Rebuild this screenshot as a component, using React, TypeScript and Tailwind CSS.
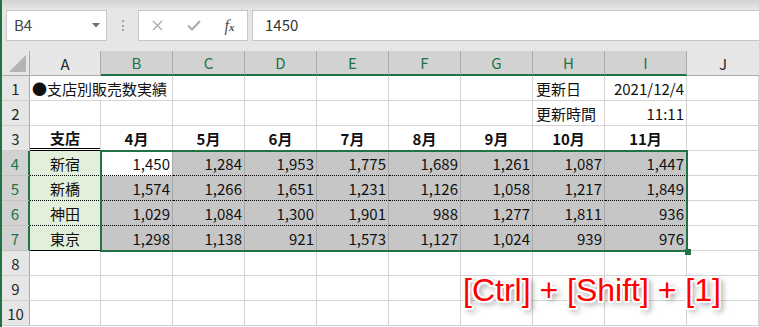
const colLetters = ['B', 'C', 'D', 'E', 'F', 'G', 'H', 'I'];
const months = ['4月', '5月', '6月', '7月', '8月', '9月', '10月', '11月'];

const branches = [
  { name: '新宿', values: ['1,450', '1,284', '1,953', '1,775', '1,689', '1,261', '1,087', '1,447'] },
  { name: '新橋', values: ['1,574', '1,266', '1,651', '1,231', '1,126', '1,058', '1,217', '1,849'] },
  { name: '神田', values: ['1,029', '1,084', '1,300', '1,901', '988', '1,277', '1,811', '936'] },
  { name: '東京', values: ['1,298', '1,138', '921', '1,573', '1,127', '1,024', '939', '976'] },
];

const cell = 'flex items-center border-r border-b border-[#d4d4d4] px-[2px] text-[15px] leading-none whitespace-nowrap';
const sheetGrid = 'grid grid-cols-[28px_71px_repeat(7,72px)_82px_1fr] grid-rows-[repeat(11,25px)]';

function RowHead({ n, selected }: { n: number; selected?: boolean }) {
  return selected ? (
    <div className="flex items-center justify-center border-b border-r-2 border-b-[#c4c4c4] border-r-[#217346] bg-[#d2d2d2] text-[15px] leading-none text-[#217346]">
      {n}
    </div>
  ) : (
    <div className="flex items-center justify-center border-b border-r border-b-[#cfcfcf] border-r-[#ababab] bg-[#e6e6e6] text-[15px] leading-none text-[#262626]">
      {n}
    </div>
  );
}

function EmptyRow({ n }: { n: number }) {
  return (
    <>
      <RowHead n={n} />
      {Array.from({ length: 10 }).map((_, i) => (
        <div key={i} className={cell} />
      ))}
    </>
  );
}

export default function App() {
  return (
    <div className="relative h-[327px] w-[759px] overflow-hidden border-l-2 border-[#217346] bg-white font-['Noto_Sans_CJK_JP',sans-serif] text-[#111]">
      {/* formula bar */}
      <div className="h-[51px] bg-[#e6e6e6]">
        <div className="h-[10px] bg-gradient-to-b from-[#d3d3d3] to-[#e6e6e6]" />
        <div className="flex h-[31px]">
          <div className="ml-[4px] flex w-[101px] items-center justify-between border border-[#c6c6c6] bg-white pl-[7px] pr-[6px]">
            <span className="text-[15px] text-[#444]">B4</span>
            <svg width="8" height="5" viewBox="0 0 8 5">
              <path d="M0 0h8L4 4.5z" fill="#6d6d6d" />
            </svg>
          </div>
          <div className="flex w-[31px] flex-col items-center justify-center gap-[2.5px]">
            <span className="h-[2px] w-[2px] bg-[#a0a0a0]" />
            <span className="h-[2px] w-[2px] bg-[#a0a0a0]" />
            <span className="h-[2px] w-[2px] bg-[#a0a0a0]" />
          </div>
          <div className="flex w-[110px] items-center border border-[#c6c6c6] bg-white">
            <span className="flex w-[37px] justify-center">
              <svg width="11" height="11" viewBox="0 0 11 11">
                <path d="M1 1l9 9M10 1l-9 9" stroke="#acacac" strokeWidth="1.4" />
              </svg>
            </span>
            <span className="flex w-[36px] justify-center">
              <svg width="14" height="11" viewBox="0 0 14 11">
                <path d="M1 5.5l4 4L13 1" stroke="#acacac" strokeWidth="2" fill="none" />
              </svg>
            </span>
            <span className="flex w-[35px] items-baseline justify-center font-['Liberation_Serif',serif] text-[16px] italic leading-none text-[#505050]">
              f<span className="text-[11px] font-bold">x</span>
            </span>
          </div>
          <div className="ml-[4px] flex flex-1 items-center border border-r-0 border-[#c6c6c6] bg-white pl-[12px] text-[15px] text-[#333]">
            1450
          </div>
        </div>
      </div>

      {/* sheet: cells and selection frame share one grid area */}
      <div className="grid">
        <div className={`${sheetGrid} col-start-1 row-start-1`}>
          {/* column headers */}
          <div className="flex items-end justify-end border-r border-b border-[#ababab] bg-[#e6e6e6] pr-[3px] pb-[3px]">
            <svg width="17" height="17" viewBox="0 0 17 17">
              <path d="M17 0V17H0z" fill="#b4b4b4" />
            </svg>
          </div>
          <div className="flex items-center justify-center border-r border-b border-[#ababab] bg-[#e6e6e6] text-[15px] leading-none text-[#262626]">
            A
          </div>
          {colLetters.map((c) => (
            <div
              key={c}
              className="flex items-center justify-center border-r border-b-2 border-r-[#ababab] border-b-[#217346] bg-[#d2d2d2] text-[15px] leading-none text-[#217346]"
            >
              {c}
            </div>
          ))}
          <div className="flex items-center justify-center border-b border-[#ababab] bg-[#e6e6e6] text-[15px] leading-none text-[#262626]">
            J
          </div>

          {/* row 1 */}
          <RowHead n={1} />
          <div className="relative z-[1] flex items-center border-b border-[#d4d4d4] pl-[2px] text-[15px] leading-none whitespace-nowrap">
            ●支店別販売数実績
          </div>
          <div className={cell} />
          <div className={cell} />
          <div className={cell} />
          <div className={cell} />
          <div className={cell} />
          <div className={cell} />
          <div className={`${cell} pl-[3px]`}>更新日</div>
          <div className={`${cell} justify-end`}>2021/12/4</div>
          <div className={cell} />

          {/* row 2 */}
          <RowHead n={2} />
          <div className={cell} />
          <div className={cell} />
          <div className={cell} />
          <div className={cell} />
          <div className={cell} />
          <div className={cell} />
          <div className={cell} />
          <div className={`${cell} pl-[3px]`}>更新時間</div>
          <div className={`${cell} justify-end`}>11:11</div>
          <div className={cell} />

          {/* row 3 */}
          <RowHead n={3} />
          <div className="flex items-center justify-center border-r border-b-[3px] border-r-[#d4d4d4] border-b-black [border-bottom-style:double] text-[15px] font-bold leading-none">
            支店
          </div>
          {months.map((m) => (
            <div key={m} className={`${cell} justify-center font-bold`}>
              {m}
            </div>
          ))}
          <div className={cell} />

          {/* rows 4-7 */}
          {branches.map((b, r) => {
            const last = r === branches.length - 1;
            return (
              <div key={b.name} className="contents">
                <RowHead n={r + 4} selected />
                <div
                  className={
                    last
                      ? 'flex items-center justify-center border-r border-b border-r-[#d4d4d4] border-b-black bg-[#e2efda] text-[15px] leading-none'
                      : 'flex items-center justify-center border-r border-b border-r-[#d4d4d4] border-b-black [border-bottom-style:dotted] bg-[#e2efda] text-[15px] leading-none'
                  }
                >
                  {b.name}
                </div>
                {b.values.map((v, i) => {
                  const active = r === 0 && i === 0;
                  return (
                    <div
                      key={i}
                      className={
                        (last
                          ? 'flex items-center justify-end border-r border-b border-[#a9a9a9] pr-[2px] text-[15px] leading-none'
                          : 'flex items-center justify-end border-r border-b border-r-[#a9a9a9] border-b-black [border-bottom-style:dotted] pr-[2px] text-[15px] leading-none') +
                        (active ? ' bg-white' : ' bg-[#c6c6c6]')
                      }
                    >
                      {v}
                    </div>
                  );
                })}
                <div className={cell} />
              </div>
            );
          })}

          <EmptyRow n={8} />
          <EmptyRow n={9} />
          <EmptyRow n={10} />
        </div>

        {/* selection frame over B4:I7 */}
        <div className={`${sheetGrid} pointer-events-none relative z-10 col-start-1 row-start-1`}>
          <div className="relative col-start-3 col-end-11 row-start-5 row-end-9 -mt-px -mr-px -mb-px -ml-px border-2 border-[#217346]">
            <div className="absolute -right-[5px] -bottom-[5px] h-[6px] w-[6px] bg-[#217346]" />
          </div>
        </div>
      </div>

      {/* shortcut caption */}
      <div className="absolute top-[274px] left-[461px] z-20 font-['Liberation_Sans',sans-serif] text-[32px] leading-none whitespace-pre text-[#ff0000] [text-shadow:2px_0_0_#fff,-2px_0_0_#fff,0_2px_0_#fff,0_-2px_0_#fff,1.5px_1.5px_0_#fff,-1.5px_-1.5px_0_#fff,1.5px_-1.5px_0_#fff,-1.5px_1.5px_0_#fff,3px_3px_6px_rgba(0,0,0,0.6)]">
        [Ctrl] + [Shift] + [1]
      </div>
    </div>
  );
}
